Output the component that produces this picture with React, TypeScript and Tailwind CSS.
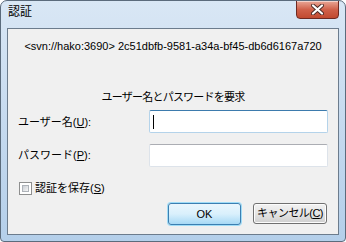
import React from "react";

const U = ({ c }: { c: string }) => (
  <span>
    (<span className="underline underline-offset-[1px]">{c}</span>)
  </span>
);

export default function App() {
  return (
    <div
      className="w-[346px] h-[242px] flex flex-col border border-[#5b6b7c] rounded-t-[7px] rounded-b-[4px] overflow-hidden bg-gradient-to-b from-[#d9e7f5] via-[#c6daef] to-[#b4cfea] text-black"
      style={{ fontFamily: '"Liberation Sans", "Noto Sans CJK JP", sans-serif' }}
    >
      {/* title bar */}
      <div className="h-[27px] flex items-start">
        <span className="ml-[7px] mt-[4px] text-[12px] leading-[15px] flex-1">認証</span>
        <div className="mr-[6px] mt-[-1px] w-[43px] h-[19px] rounded-b-[4px] border border-[#6e2a22] bg-gradient-to-b from-[#e8a797] via-[#d0614a] to-[#c14a30] flex items-center justify-center shadow-[inset_0_1px_0_rgba(255,255,255,0.5)]">
          <svg width="13" height="11" viewBox="0 0 13 11">
            <path d="M2 1.5 L11 9.5 M11 1.5 L2 9.5" stroke="#4a2a26" strokeWidth="4" strokeLinecap="round" />
            <path d="M2 1.5 L11 9.5 M11 1.5 L2 9.5" stroke="#ffffff" strokeWidth="2.2" strokeLinecap="round" />
          </svg>
        </div>
      </div>

      {/* client area */}
      <div className="mx-[6px] h-[207px] border border-[#6c7c8d] bg-[#f0f0f0] flex flex-col text-[11px] leading-[15px]">
        <div className="mt-[10px] text-center">&lt;svn://hako:3690&gt; 2c51dbfb-9581-a34a-bf45-db6d6167a720</div>
        <div className="mt-[36px] text-center tracking-[-0.07em]">ユーザー名とパスワードを要求</div>

        <div className="mt-[5px] flex items-center pl-[10px] pr-[10px]">
          <span className="flex-1 pt-[2px]">
            ユーザー名<U c="U" />:
          </span>
          <div className="w-[179px] h-[23px] rounded-[2px] border border-[#b4d3ea] border-t-[#3d7bad] bg-white flex items-center pl-[3px]">
            <span className="w-[1px] h-[14px] bg-black" />
          </div>
        </div>

        <div className="mt-[11px] flex items-center pl-[10px] pr-[10px]">
          <span className="flex-1">
            パスワード<U c="P" />:
          </span>
          <div className="w-[179px] h-[23px] rounded-[2px] border border-[#dde3ea] border-t-[#abadb3] bg-white" />
        </div>

        <div className="mt-[14px] flex items-center pl-[11px] gap-[3px]">
          <div className="w-[13px] h-[13px] border border-[#8e8f8f] bg-white p-[2px]">
            <div className="w-full h-full bg-gradient-to-br from-[#cbcfd5] to-[#f6f6f6] border border-[#aeb3b9]" />
          </div>
          <span>
            認証を保存<U c="S" />
          </span>
        </div>

        <div className="mt-[7px] flex justify-end pr-[11px] gap-[12px]">
          <div className="w-[73px] h-[22px] rounded-[3px] border border-[#3c7fb1] shadow-[0_0_0_1px_#9fdcf7] bg-gradient-to-b from-[#eaf6fd] via-[#d9f0fc] to-[#a7d9f5] flex items-center justify-center">
            OK
          </div>
          <div className="w-[74px] h-[21px] rounded-[3px] border border-[#707070] bg-gradient-to-b from-[#f2f2f2] via-[#e5e5e5] to-[#cfcfcf] shadow-[inset_0_0_0_1px_#fcfcfc] flex items-center justify-center tracking-[-0.05em]">
            キャンセル<U c="C" />
          </div>
        </div>
      </div>
    </div>
  );
}
